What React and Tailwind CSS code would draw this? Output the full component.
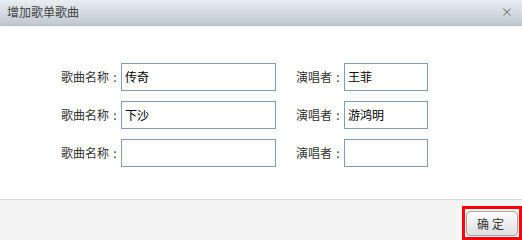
const font = { fontFamily: '"Noto Sans CJK SC", "Liberation Sans", sans-serif' };

function Label({ text, width }) {
  return (
    <span className={`${width} flex justify-end text-[12px] text-[#333]`}>
      {text}
      <span className="w-[12px] text-center">:</span>
    </span>
  );
}

function Row({ song, singer }) {
  return (
    <div className="flex items-center h-[28px]">
      <Label text="歌曲名称" width="w-[61px]" />
      <div className="w-[155px] h-[28px] border border-[#7f9db9] bg-white flex items-center px-[3px] text-[12px] text-black">
        {song}
      </div>
      <span className="ml-[20px]" />
      <Label text="演唱者" width="w-[48px]" />
      <div className="w-[84px] h-[28px] border border-[#7f9db9] bg-white flex items-center px-[3px] text-[12px] text-black">
        {singer}
      </div>
    </div>
  );
}

export default function App() {
  return (
    <div className="w-[522px] h-[240px] flex flex-col bg-white overflow-hidden" style={font}>
      <div className="h-[26px] flex items-center justify-between px-[7px] bg-gradient-to-b from-[#e9eef2] to-[#c0c8cf] border-b border-[#b6bec6]">
        <span className="text-[12px] text-[#444]">增加歌单歌曲</span>
        <span className="text-[12px] text-[#777] pr-[2px]">×</span>
      </div>
      <div className="h-[174px] pl-[60px] pt-[37px] flex flex-col gap-[10px]">
        <Row song="传奇" singer="王菲" />
        <Row song="下沙" singer="游鸿明" />
        <Row song="" singer="" />
      </div>
      <div className="flex-1 border-t border-[#d4d8dc] bg-[#f4f4f4] flex justify-end items-start pt-[6px]">
        <div className="border-[3px] border-[#ff0000] p-[1px]">
          <button className="w-[52px] h-[25px] rounded-[4px] border border-[#a8a8a8] bg-gradient-to-b from-[#fdfdfd] to-[#dedede] text-[12px] text-[#333] tracking-[3px]">
            确定
          </button>
        </div>
      </div>
    </div>
  );
}
